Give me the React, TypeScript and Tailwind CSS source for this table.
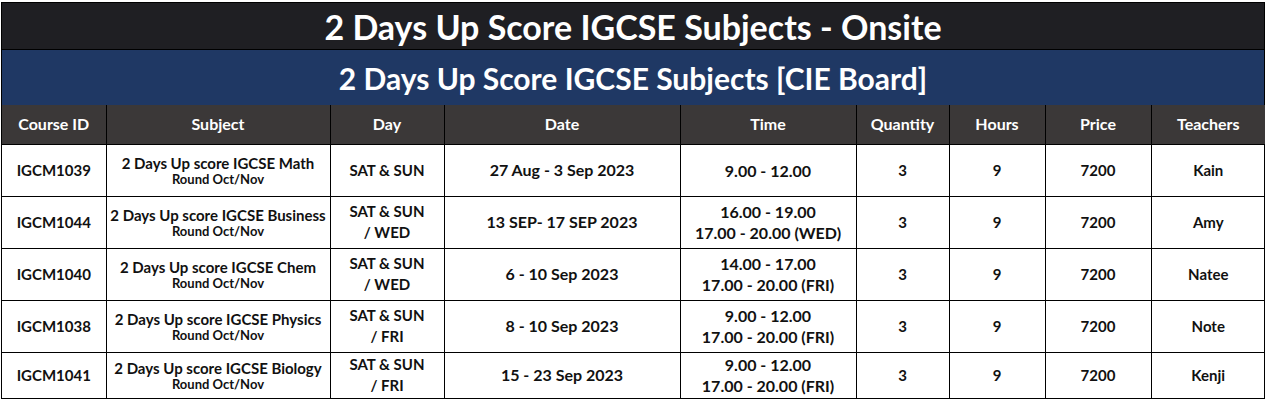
import React from "react";

const rows = [
  { id: "IGCM1039", subj: "2 Days Up score IGCSE Math", day: ["SAT & SUN"], date: "27 Aug - 3 Sep 2023", time: ["9.00 - 12.00"], teacher: "Kain" },
  { id: "IGCM1044", subj: "2 Days Up score IGCSE Business", day: ["SAT & SUN", "/ WED"], date: "13 SEP- 17 SEP 2023", time: ["16.00 - 19.00", "17.00 - 20.00 (WED)"], teacher: "Amy" },
  { id: "IGCM1040", subj: "2 Days Up score IGCSE Chem", day: ["SAT & SUN", "/ WED"], date: "6 - 10 Sep 2023", time: ["14.00 - 17.00", "17.00 - 20.00 (FRI)"], teacher: "Natee" },
  { id: "IGCM1038", subj: "2 Days Up score IGCSE Physics", day: ["SAT & SUN", "/ FRI"], date: "8 - 10 Sep 2023", time: ["9.00 - 12.00", "17.00 - 20.00 (FRI)"], teacher: "Note" },
  { id: "IGCM1041", subj: "2 Days Up score IGCSE Biology", day: ["SAT & SUN", "/ FRI"], date: "15 - 23 Sep 2023", time: ["9.00 - 12.00", "17.00 - 20.00 (FRI)"], teacher: "Kenji" },
];

const headers = ["Course ID", "Subject", "Day", "Date", "Time", "Quantity", "Hours", "Price", "Teachers"];

export default function App() {
  return (
    <div className="w-[1267px] h-[401px] bg-white pt-[2px] pl-px" style={{ fontFamily: "Lato, 'Noto Sans', sans-serif" }}>
      <div className="w-[1264px] border-t border-r border-l border-black">
        <div className="h-[47px] bg-[#1f1f23] flex items-center justify-center border-b border-black">
          <span className="text-white font-bold text-[34px] leading-none mt-[2px]">2 Days Up Score IGCSE Subjects - Onsite</span>
        </div>
        <div className="h-[55px] bg-[#1f3864] flex items-center justify-center">
          <span className="text-white font-bold text-[30px] leading-none">2 Days Up Score IGCSE Subjects [CIE Board]</span>
        </div>
        <table className="table-fixed border-collapse w-[1263px]">
          <colgroup>
            <col className="w-[104px]" />
            <col className="w-[224px]" />
            <col className="w-[114px]" />
            <col className="w-[236px]" />
            <col className="w-[176px]" />
            <col className="w-[93px]" />
            <col className="w-[96px]" />
            <col className="w-[106px]" />
            <col className="w-[114px]" />
          </colgroup>
          <thead>
            <tr className="h-[39px] bg-[#3b3838]">
              {headers.map((h) => (
                <th key={h} className="border-x border-b border-black first:border-l-0 last:border-r-0 text-white font-bold text-[16px] text-center p-0">
                  {h}
                </th>
              ))}
            </tr>
          </thead>
          <tbody className="text-[#111] font-bold">
            {rows.map((r, i) => (
              <tr key={r.id} className={i === rows.length - 1 ? "h-[46px]" : "h-[52px]"}>
                <td className="border-b border-r border-black text-center text-[15px] p-0">{r.id}</td>
                <td className="border border-black text-center p-0">
                  <div className="text-[15px] font-bold leading-[18px] whitespace-nowrap">{r.subj}</div>
                  <div className="text-[13px] font-bold leading-[15px]">Round Oct/Nov</div>
                </td>
                <td className="border border-black text-center text-[15px] p-0 leading-[21px]">
                  {r.day.map((d) => (
                    <div key={d}>{d}</div>
                  ))}
                </td>
                <td className="border border-black text-center text-[16px] p-0">{r.date}</td>
                <td className="border border-black text-center text-[16px] p-0 leading-[21px]">
                  {r.time.map((t) => (
                    <div key={t}>{t}</div>
                  ))}
                </td>
                <td className="border border-black text-center text-[15px] p-0">3</td>
                <td className="border border-black text-center text-[15px] p-0">9</td>
                <td className="border border-black text-center text-[15px] p-0">7200</td>
                <td className="border-b border-l border-black text-center text-[15px] p-0">{r.teacher}</td>
              </tr>
            ))}
          </tbody>
        </table>
      </div>
    </div>
  );
}
